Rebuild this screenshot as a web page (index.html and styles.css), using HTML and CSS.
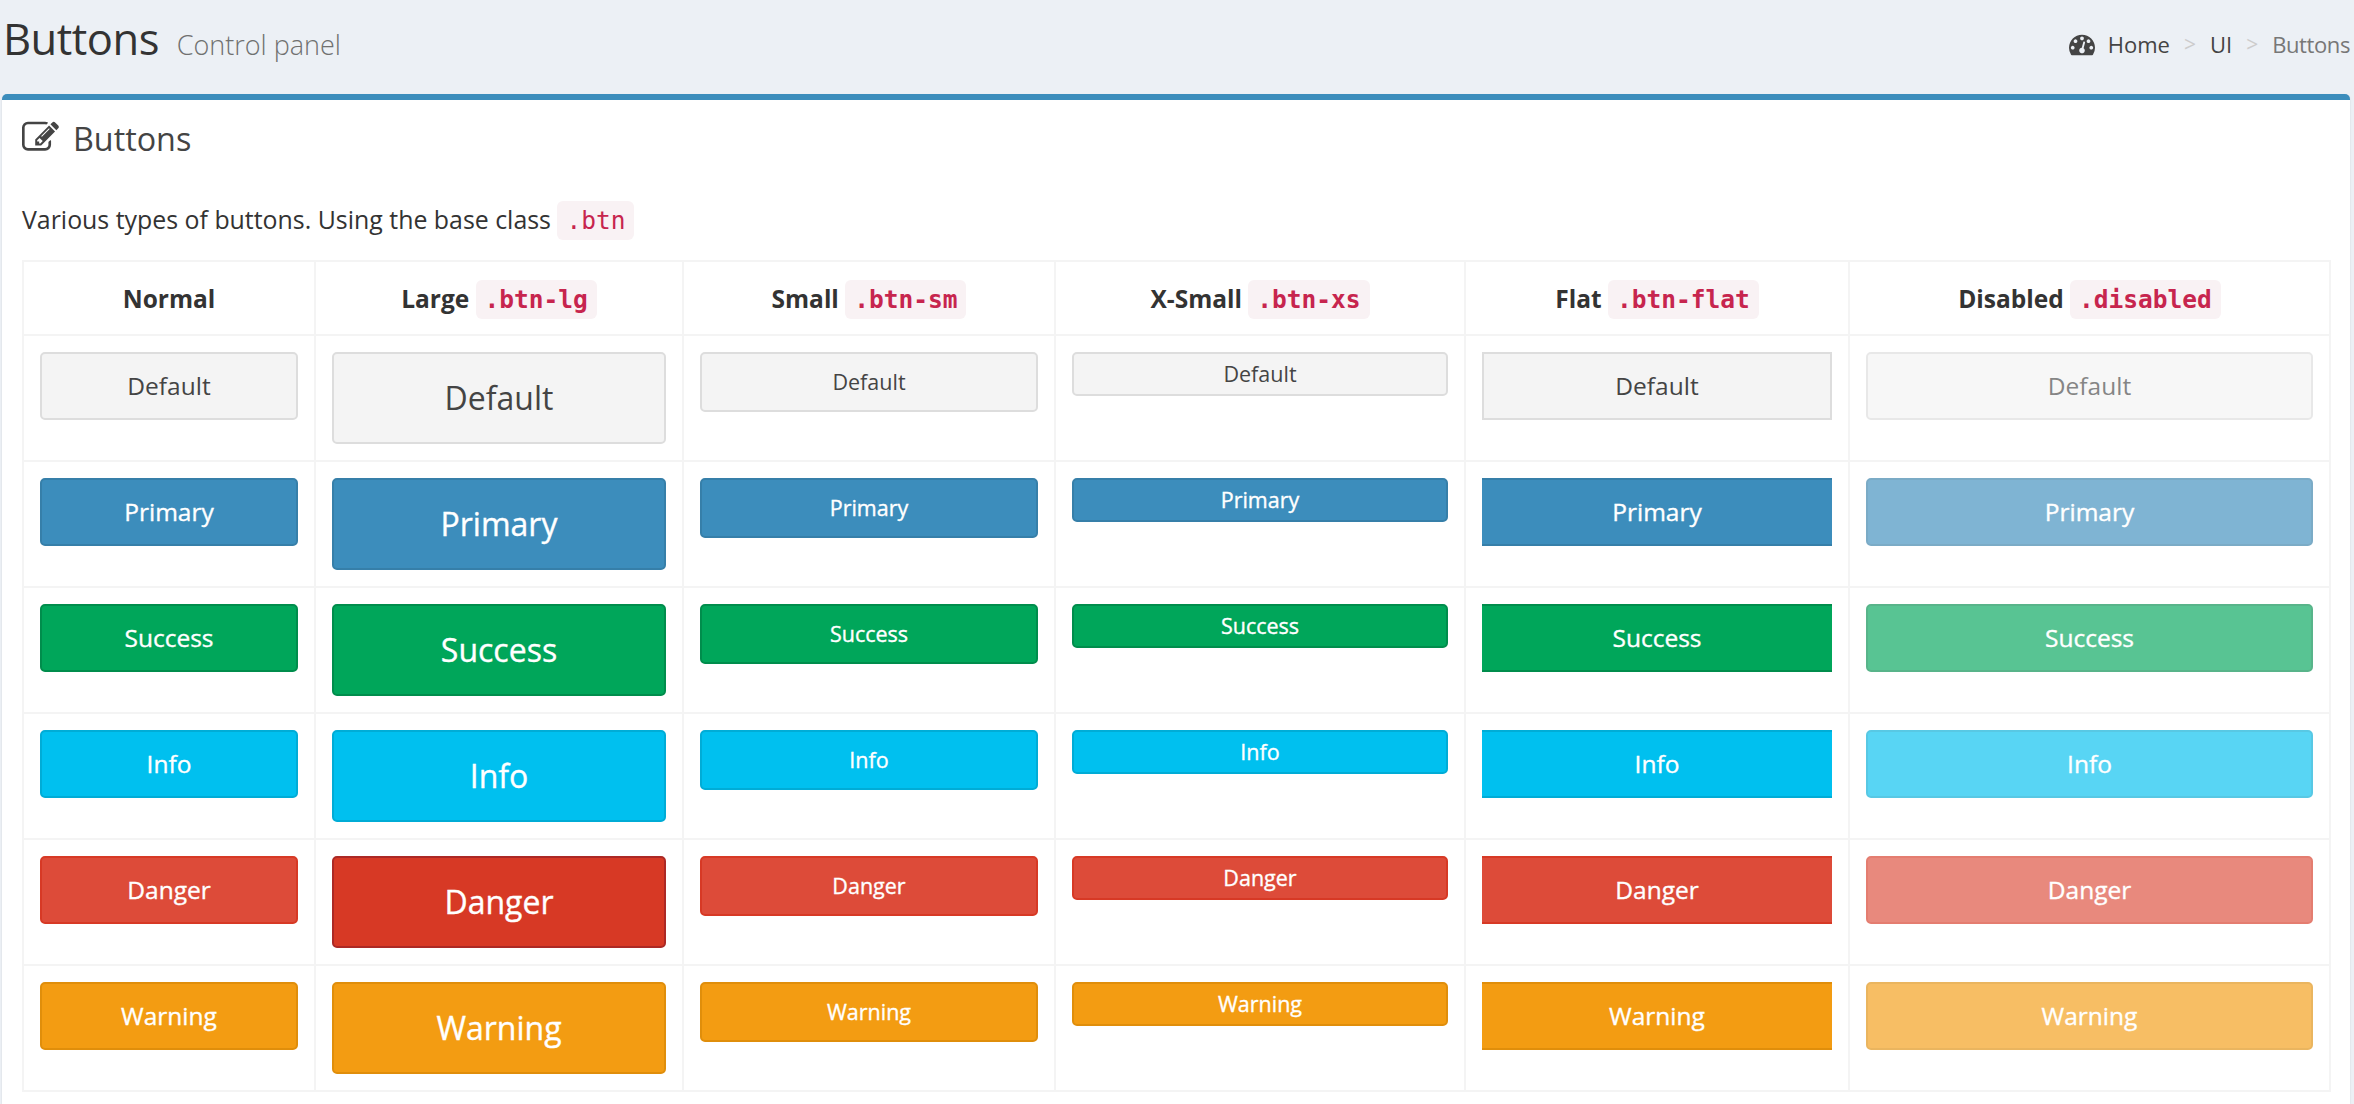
FILE: index.html
```html
<!DOCTYPE html>
<html lang="en">
<head>
<meta charset="utf-8">
<title>Buttons</title>
<link rel="stylesheet" href="styles.css">
</head>
<body>
<header class="page-head">
  <h1 class="page-title">Buttons <small class="page-sub">Control panel</small></h1>
  <nav class="crumbs">
    <svg class="crumb-icon" viewBox="0 0 1792 1792"><path fill-rule="evenodd" d="M384 1152q0-53-37.5-90.5t-90.5-37.5-90.5 37.5-37.5 90.5 37.5 90.5 90.5 37.5 90.5-37.5 37.5-90.5zm192-448q0-53-37.5-90.5t-90.5-37.5-90.5 37.5-37.5 90.5 37.5 90.5 90.5 37.5 90.5-37.5 37.5-90.5zm428 481l101-382q6-26-7.5-48.5t-38.5-29.5-48 6.5-30 39.5l-101 382q-60 5-107 43.5t-63 98.5q-20 77 20 146t117 89 146-20 89-117q16-60-6-117t-72-91zm660-33q0-53-37.5-90.5t-90.5-37.5-90.5 37.5-37.5 90.5 37.5 90.5 90.5 37.5 90.5-37.5 37.5-90.5zm-640-640q0-53-37.5-90.5t-90.5-37.5-90.5 37.5-37.5 90.5 37.5 90.5 90.5 37.5 90.5-37.5 37.5-90.5zm448 192q0-53-37.5-90.5t-90.5-37.5-90.5 37.5-37.5 90.5 37.5 90.5 90.5 37.5 90.5-37.5 37.5-90.5zm320 448q0 261-141 483-19 29-54 29h-1402q-35 0-54-29-141-221-141-483 0-182 71-348t191-286 286-191 348-71 348 71 286 191 191 286 71 348z"/></svg>
    <a class="crumb">Home</a><span class="sep">&gt;</span><a class="crumb">UI</a><span class="sep">&gt;</span><span class="crumb crumb-active">Buttons</span>
  </nav>
</header>
<main class="box">
  <div class="box-head">
    <svg class="box-icon" viewBox="0 0 1792 1792"><path d="M888 1184l116-116-152-152-116 116v56h96v96h56zm440-720q-16-16-33 1l-350 350q-17 17-1 33t33-1l350-350q17-17 1-33zm80 594v190q0 119-84.5 203.5t-203.5 84.5h-832q-119 0-203.5-84.5t-84.5-203.5v-832q0-119 84.5-203.5t203.5-84.5h832q63 0 117 25 15 7 18 23 3 17-9 29l-49 49q-14 14-32 8-23-6-45-6h-832q-66 0-113 47t-47 113v832q0 66 47 113t113 47h832q66 0 113-47t47-113v-126q0-13 9-22l64-64q15-15 35-7t20 29zm-96-738l288 288-672 672h-288v-288zm444 132l-92 92-288-288 92-92q28-28 68-28t68 28l152 152q28 28 28 68t-28 68z"/></svg>
    <h3 class="box-title">Buttons</h3>
  </div>
  <div class="box-body">
    <p class="intro">Various types of buttons. Using the base class <code>.btn</code></p>
    <table class="grid">
      <colgroup><col class="c1"><col class="c2"><col class="c3"><col class="c4"><col class="c5"><col class="c6"></colgroup>
      <thead>
        <tr><th>Normal</th><th>Large <code>.btn-lg</code></th><th>Small <code>.btn-sm</code></th><th>X-Small <code>.btn-xs</code></th><th>Flat <code>.btn-flat</code></th><th>Disabled <code>.disabled</code></th></tr>
      </thead>
      <tbody>
        <tr>
          <td><button class="btn default">Default</button></td><td><button class="btn lg default">Default</button></td><td><button class="btn sm default">Default</button></td><td><button class="btn xs default">Default</button></td><td><button class="btn flat default">Default</button></td><td><button class="btn off default">Default</button></td>
        </tr>
        <tr>
          <td><button class="btn primary">Primary</button></td><td><button class="btn lg primary">Primary</button></td><td><button class="btn sm primary">Primary</button></td><td><button class="btn xs primary">Primary</button></td><td><button class="btn flat primary">Primary</button></td><td><button class="btn off primary">Primary</button></td>
        </tr>
        <tr>
          <td><button class="btn success">Success</button></td><td><button class="btn lg success">Success</button></td><td><button class="btn sm success">Success</button></td><td><button class="btn xs success">Success</button></td><td><button class="btn flat success">Success</button></td><td><button class="btn off success">Success</button></td>
        </tr>
        <tr>
          <td><button class="btn info">Info</button></td><td><button class="btn lg info">Info</button></td><td><button class="btn sm info">Info</button></td><td><button class="btn xs info">Info</button></td><td><button class="btn flat info">Info</button></td><td><button class="btn off info">Info</button></td>
        </tr>
        <tr>
          <td><button class="btn danger">Danger</button></td><td><button class="btn lg danger hover">Danger</button></td><td><button class="btn sm danger">Danger</button></td><td><button class="btn xs danger">Danger</button></td><td><button class="btn flat danger">Danger</button></td><td><button class="btn off danger">Danger</button></td>
        </tr>
        <tr>
          <td><button class="btn warning">Warning</button></td><td><button class="btn lg warning">Warning</button></td><td><button class="btn sm warning">Warning</button></td><td><button class="btn xs warning">Warning</button></td><td><button class="btn flat warning">Warning</button></td><td><button class="btn off warning">Warning</button></td>
        </tr>
      </tbody>
    </table>
  </div>
</main>
</body>
</html>
```
FILE: styles.css
```css
* { box-sizing: border-box; }
html, body { margin: 0; height: 1104px; overflow: hidden; }
body {
  background: #ecf0f5;
  color: #333;
  font-family: "Open Sans", "Liberation Sans", sans-serif;
  font-size: 24.5px;
  padding: 0 4px 0 2px;
}
.page-head {
  height: 94px;
  display: flex;
  justify-content: space-between;
  align-items: flex-start;
}
.page-title {
  margin: 12px 0 0 1px;
  font-size: 43.5px;
  line-height: 54px;
  font-weight: 400;
  letter-spacing: -0.5px;
}
.page-sub {
  font-size: 27px;
  font-weight: 300;
  color: #707070;
  margin-left: 7px;
  letter-spacing: 0;
}
.crumbs {
  display: flex;
  align-items: center;
  margin-top: 28px;
  font-size: 22px;
  line-height: 32px;
  color: #444;
}
.crumb-icon { width: 26px; height: 26px; fill: #444; margin-right: 13px; }
.sep { color: #ccc; margin: 0 14px; font-size: 21px; }
.crumb-active { color: #777; letter-spacing: -0.4px; }
.box {
  height: 1010px;
  background: #fff;
  border-top: 6px solid #3c8dbc;
  border-radius: 5px 5px 0 0;
  box-shadow: 0 1px 2px rgba(0, 0, 0, .12);
}
.box-head {
  display: flex;
  align-items: center;
  gap: 14px;
  padding: 15px 20px 0;
  height: 60px;
}
.box-icon { width: 37px; height: 37px; fill: #444; flex: none; margin-top: -1px; }
.box-title {
  margin: 0;
  font-size: 32.3px;
  line-height: 40px;
  font-weight: 400;
  color: #444;
}
.box-body { padding: 0 20px; }
.intro { margin: 39px 0 0; line-height: 40px; height: 61px; font-size: 24.9px; }
code {
  font-family: "DejaVu Sans Mono", monospace;
  font-size: 24.5px;
  color: #c7254e;
  background: #f9f2f4;
  border-radius: 6px;
  padding: 5px 9px;
}
.grid {
  width: 2307px;
  table-layout: fixed;
  border-collapse: collapse;
}
.c1 { width: 292px; }
.c2 { width: 368px; }
.c3 { width: 372px; }
.c4 { width: 410px; }
.c5 { width: 384px; }
.c6 { width: 481px; }
.grid th, .grid td { border: 2px solid #f4f4f4; }
.grid th {
  height: 74px;
  text-align: center;
  font-size: 24.5px;
  font-weight: 700;
  padding: 0 16px;
}
.grid td {
  height: 126px;
  padding: 16px;
  vertical-align: top;
}
.btn {
  display: block;
  width: 100%;
  height: 68px;
  font: inherit;
  font-size: 24.5px;
  color: #fff;
  -webkit-text-stroke: 0.35px currentColor;
  border: 2px solid transparent;
  border-radius: 5px;
  padding: 0 0 2px;
}
.lg { height: 92px; font-size: 32px; }
.sm { height: 60px; font-size: 21.5px; }
.xs { height: 44px; font-size: 21.5px; }
.flat { border-radius: 0; border-left: 0; border-right: 0; }
.off { opacity: .65; }
.default { background: #f4f4f4; color: #444; border-color: #ddd; -webkit-text-stroke: 0; }
.default.flat { border-left: 2px solid #ddd; border-right: 2px solid #ddd; }
.primary { background: #3c8dbc; border-color: #367fa9; }
.success { background: #00a65a; border-color: #008d4c; }
.info { background: #00c0ef; border-color: #00acd6; }
.danger { background: #dd4b39; border-color: #d73925; }
.danger.hover { background: #d73925; border-color: #ac2925; }
.warning { background: #f39c12; border-color: #e08e0b; }
```
